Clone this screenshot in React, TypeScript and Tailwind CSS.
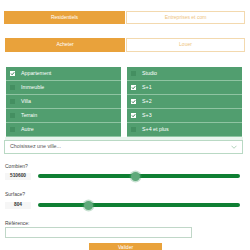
import React from "react";

const left = [
  { label: "Appartement", checked: true },
  { label: "Immeuble", checked: false },
  { label: "Villa", checked: false },
  { label: "Terrain", checked: false },
  { label: "Autre", checked: false },
];
const right = [
  { label: "Studio", checked: false },
  { label: "S+1", checked: true },
  { label: "S+2", checked: true },
  { label: "S+3", checked: true },
  { label: "S+4 et plus", checked: false },
];

function Row({ label, checked }: { label: string; checked: boolean }) {
  return (
    <div className="h-[14px] bg-[#519e6f] border-b border-[#8fc4a2] flex items-center pl-[4px]">
      {checked ? (
        <div className="w-[5px] h-[5px] bg-white flex items-center justify-center">
          <svg width="5" height="5" viewBox="0 0 10 10">
            <path d="M2 5 L4.2 7.5 L8.5 2.5" stroke="#3c7a54" strokeWidth="2" fill="none" />
          </svg>
        </div>
      ) : (
        <div className="w-[5px] h-[5px] bg-[#448f61]" />
      )}
      <span className="ml-[6px] text-[5.3px] text-white leading-none">{label}</span>
    </div>
  );
}

function Slider({ value, pct }: { value: string; pct: number }) {
  return (
    <div className="flex items-center h-[8px]">
      <div className="w-[26px] h-[7px] ml-[5px] bg-[#f6f6f6] flex items-center justify-center text-[4.8px] font-bold text-[#333]">
        {value}
      </div>
      <div className="relative ml-[7px] w-[202px] h-[4px] rounded-full bg-[#0f7f33]">
        <div
          className="absolute top-1/2 w-[9px] h-[9px] -ml-[4.5px] -mt-[4.5px] rounded-full bg-[#5fa97a] shadow-[0_0_0_1.5px_rgba(95,169,122,0.35)]"
          style={{ left: `${pct}%` }}
        />
      </div>
    </div>
  );
}

export default function App() {
  return (
    <div className="w-[250px] h-[250px] overflow-hidden bg-white font-['Liberation_Sans',Arial,sans-serif]">
      <div className="pt-[11px] pl-[4px] pr-[5px] flex h-[24px]">
        <div className="w-[121px] bg-[#e9a23b] flex items-center justify-center text-white text-[5px]">Residentiels</div>
        <div className="flex-1 ml-[1px] border border-[#f3d9ae] flex items-center justify-center text-[#eec380] text-[5px]">Entreprises et com</div>
      </div>
      <div className="mt-[14px] pl-[5px] pr-[5px] flex h-[14px]">
        <div className="w-[120px] bg-[#e9a23b] flex items-center justify-center text-white text-[5px]">Acheter</div>
        <div className="flex-1 ml-[1px] border border-[#f3d9ae] flex items-center justify-center text-[#eec380] text-[5px]">Louer</div>
      </div>
      <div className="mt-[15px] px-[5px]">
        <div className="flex">
          <div className="ml-[1px] w-[115px] flex flex-col">
            {left.map((r) => (
              <Row key={r.label} {...r} />
            ))}
          </div>
          <div className="ml-[6px] w-[115px] flex flex-col">
            {right.map((r) => (
              <Row key={r.label} {...r} />
            ))}
          </div>
        </div>
        <div className="h-[3px] bg-[#eaf4ee] w-[238px]" />
      </div>
      <div className="ml-[4px] w-[239px] h-[14px] border border-[#b9d9c4] flex items-center justify-between px-[5px]">
        <span className="text-[5.3px] text-[#555]">Choisissez une ville...</span>
        <svg width="6" height="4" viewBox="0 0 12 7">
          <path d="M1 1 L6 6 L11 1" stroke="#86bb98" strokeWidth="1.3" fill="none" />
        </svg>
      </div>
      <div className="mt-[10px] ml-[5px] text-[5px] text-[#444] leading-none h-[6px]">Combien?</div>
      <div className="mt-[2px]">
        <Slider value="510600" pct={48.5} />
      </div>
      <div className="mt-[12px] ml-[5px] text-[5px] text-[#444] leading-none h-[6px]">Surface?</div>
      <div className="mt-[3px]">
        <Slider value="804" pct={25} />
      </div>
      <div className="mt-[12px] ml-[5px] text-[5px] text-[#444] leading-none h-[5px]">Référence:</div>
      <div className="mt-[1px] ml-[5px] w-[187px] h-[11px] border border-[#c0d7c8] bg-white" />
      <div className="mt-[5px] ml-[89px] w-[73px] h-[10px] bg-[#e9a23b] flex items-start justify-center pt-[2px] text-white text-[5px] leading-none">
        Valider
      </div>
    </div>
  );
}
